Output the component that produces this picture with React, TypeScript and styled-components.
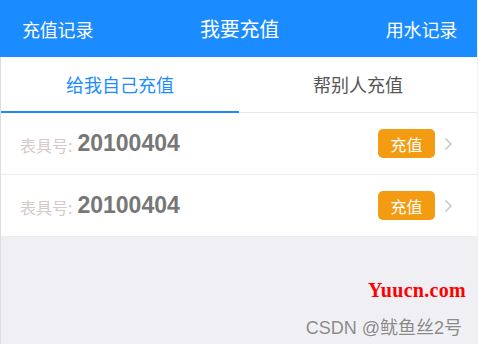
import React, { useState } from 'react';
import styled, { createGlobalStyle } from 'styled-components';

const GlobalStyle = createGlobalStyle`
  html, body {
    margin: 0;
    padding: 0;
    background: #efeff4;
  }
  body {
    font-family: "Liberation Sans", "Noto Sans CJK SC", sans-serif;
  }
`;

const Page = styled.div`
  width: 477px;
  height: 344px;
  display: flex;
  flex-direction: column;
  background: #efeff4;
  overflow: hidden;
`;

const Header = styled.div`
  height: 57px;
  flex-shrink: 0;
  background: #1a8cff;
  display: flex;
  align-items: center;
  justify-content: space-between;
  padding: 0 20px 0 22px;
  color: #fff;
  font-family: "Noto Sans CJK SC", sans-serif;
`;

const HeaderItem = styled.span<{ $main?: boolean }>`
  font-size: ${(p) => (p.$main ? '20px' : '18px')};
  letter-spacing: -0.2px;
`;

const Body = styled.div`
  flex: 1;
  display: flex;
  flex-direction: column;
  border-left: 1px solid #dedede;
`;

const TabBar = styled.div`
  display: flex;
  background: #fff;
  border-bottom: 1px solid #e8e8e8;
`;

const Tab = styled.div<{ $active?: boolean }>`
  flex: 1;
  height: 54px;
  display: flex;
  align-items: center;
  justify-content: center;
  font-size: 18px;
  font-family: "Noto Sans CJK SC", sans-serif;
  color: ${(p) => (p.$active ? '#1a8cff' : '#555')};
  border-bottom: 2px solid ${(p) => (p.$active ? '#1a8cff' : 'transparent')};
  margin-bottom: -1px;
  cursor: pointer;
`;

const Row = styled.div`
  height: 61px;
  display: flex;
  align-items: center;
  background: #fff;
  padding: 0 24px 0 19px;
  border-bottom: 1px solid #ececec;
`;

const Label = styled.span`
  color: #d6c9c9;
  font-size: 16px;
  font-family: "Noto Sans CJK SC", sans-serif;
  margin-right: 5px;
  padding-top: 3px;
`;

const MeterNo = styled.span`
  color: #777;
  font-size: 23px;
  font-weight: bold;
  font-family: "Liberation Sans", Arial, sans-serif;
  flex: 1;
`;

const PayButton = styled.button`
  width: 57px;
  height: 29px;
  border: none;
  border-radius: 5px;
  background: #f39c12;
  color: #fff;
  font-size: 16px;
  font-family: "Noto Sans CJK SC", sans-serif;
  padding: 0;
  margin-right: 9px;
  cursor: pointer;
`;

const Chevron = styled.svg`
  width: 9px;
  height: 14px;
  display: block;
`;

const Filler = styled.div`
  flex: 1;
  display: flex;
  flex-direction: column;
  align-items: flex-end;
  padding: 42px 11px 0 0;
`;

const SiteMark = styled.span`
  color: #f00;
  font-family: "Liberation Serif", serif;
  font-size: 20px;
  font-weight: bold;
  letter-spacing: 0.3px;
`;

const AuthorMark = styled.span`
  margin-top: 11px;
  margin-right: 4px;
  color: #8a8a8a;
  font-size: 18px;
  font-family: "Liberation Sans", "Noto Sans CJK SC", sans-serif;
  text-shadow: 0 0 2px #fff;
`;

const meters = ['20100404', '20100404'];

export default function App() {
  const [tab, setTab] = useState(0);

  return (
    <>
      <GlobalStyle />
      <Page>
        <Header>
          <HeaderItem>充值记录</HeaderItem>
          <HeaderItem $main>我要充值</HeaderItem>
          <HeaderItem>用水记录</HeaderItem>
        </Header>
        <Body>
          <TabBar>
            <Tab $active={tab === 0} onClick={() => setTab(0)}>
              给我自己充值
            </Tab>
            <Tab $active={tab === 1} onClick={() => setTab(1)}>
              帮别人充值
            </Tab>
          </TabBar>
          {meters.map((no, i) => (
            <Row key={i}>
              <Label>表具号:</Label>
              <MeterNo>{no}</MeterNo>
              <PayButton>充值</PayButton>
              <Chevron viewBox="0 0 9 14">
                <path d="M1.5 1.5 L7 7 L1.5 12.5" fill="none" stroke="#c8c8c8" strokeWidth="1.6" />
              </Chevron>
            </Row>
          ))}
          <Filler>
            <SiteMark>Yuucn.com</SiteMark>
            <AuthorMark>CSDN @鱿鱼丝2号</AuthorMark>
          </Filler>
        </Body>
      </Page>
    </>
  );
}
